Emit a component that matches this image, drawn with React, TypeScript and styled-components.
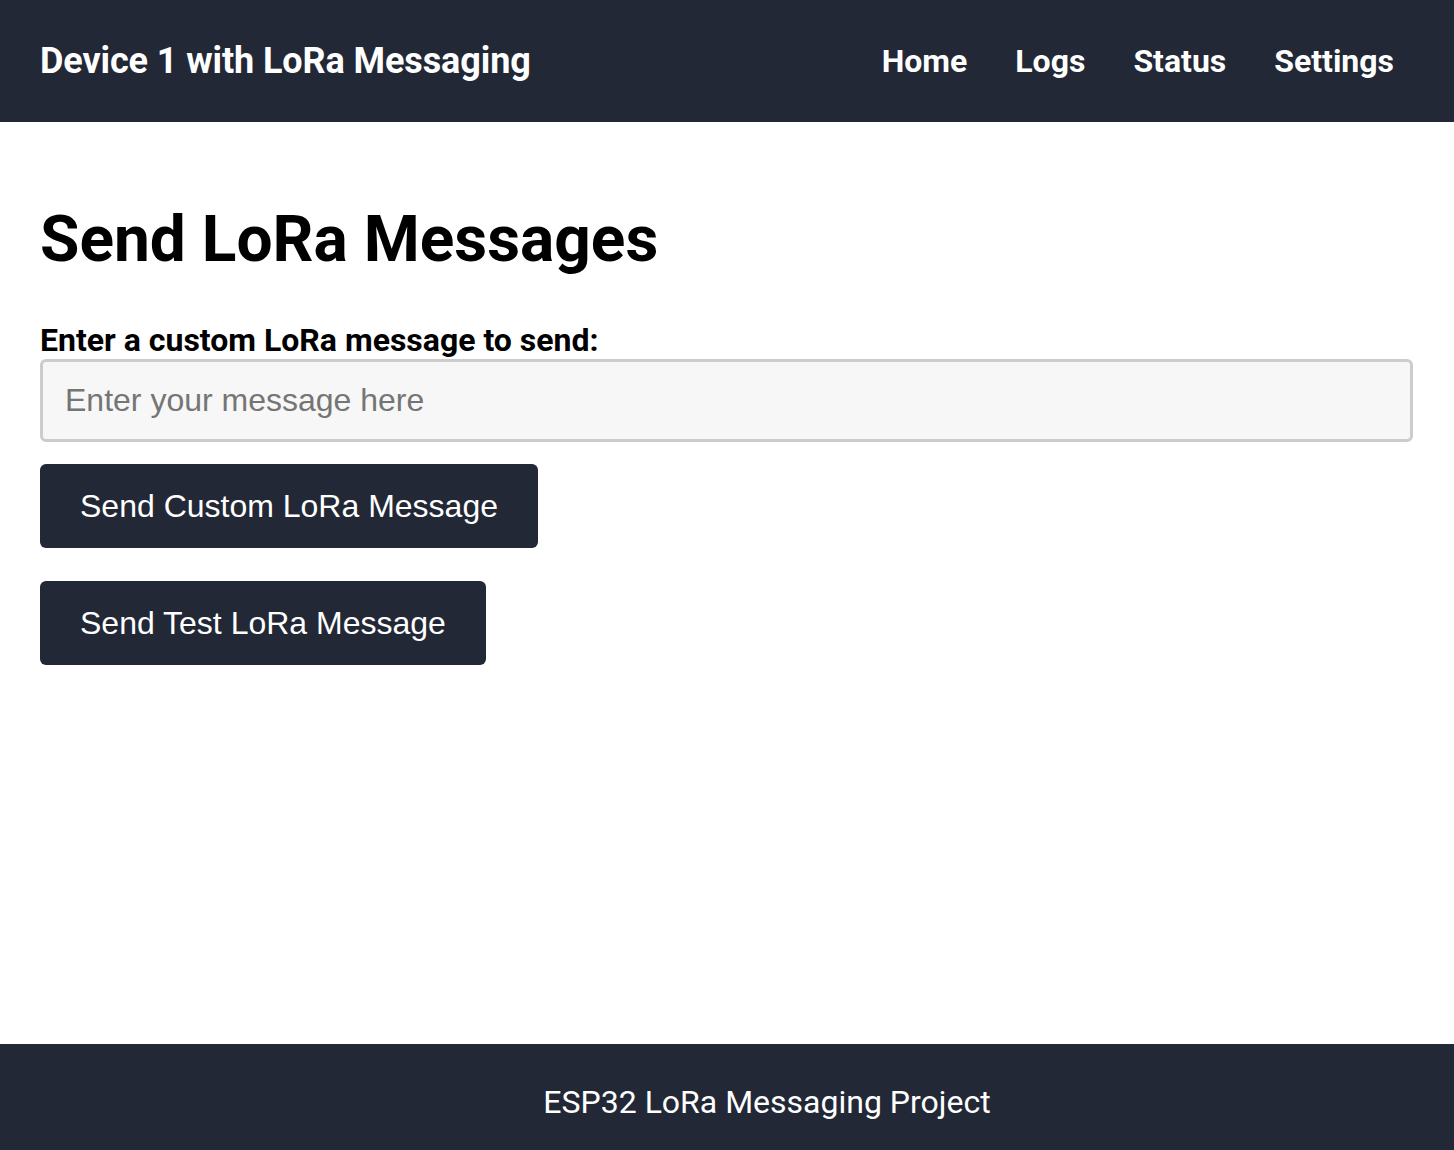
import React, { useState } from 'react'
import styled, { createGlobalStyle } from 'styled-components'

const GlobalStyle = createGlobalStyle`
  * { box-sizing: border-box; }
  html, body {
    margin: 0;
    padding: 0;
    background: #fff;
    font-family: Roboto, "Liberation Sans", Arial, sans-serif;
  }
`

const Page = styled.div`
  display: flex;
  flex-direction: column;
  min-height: 1150px;
`

const Header = styled.header`
  display: flex;
  align-items: center;
  justify-content: space-between;
  height: 122px;
  padding: 0 60px 0 40px;
  background-color: #222836;
  color: #fff;
`

const Brand = styled.div`
  font-size: 36px;
  font-weight: 700;
  letter-spacing: -0.1px;
`

const Nav = styled.nav`
  display: flex;
  gap: 48px;
`

const NavLink = styled.a`
  color: #fff;
  font-size: 32px;
  font-weight: 700;
  text-decoration: none;
  cursor: pointer;
`

const Main = styled.main`
  flex: 1;
  padding: 0 41px 0 40px;
`

const Title = styled.h1`
  margin: 80px 0 0;
  font-size: 64px;
  font-weight: 700;
  line-height: 1.2;
  color: #000;
`

const FormLabel = styled.label`
  display: block;
  margin-top: 42px;
  font-size: 32px;
  font-weight: 700;
  line-height: 1.2;
  color: #000;
`

const Input = styled.input.attrs(() => ({
  type: 'text',
}))`
  display: block;
  width: 100%;
  height: 83px;
  margin-top: 0;
  padding: 0 22px;
  border: 3px solid #cccccc;
  border-radius: 6px;
  background-color: #f7f7f7;
  font-family: "Liberation Sans", Arial, sans-serif;
  font-size: 32px;
  color: #000;
  outline: none;

  &::placeholder {
    color: #757575;
  }
`

const ButtonPrimary = styled.button<{ $top: number }>`
  display: block;
  height: 84px;
  margin-top: ${({ $top }) => $top}px;
  padding: 0 40px;
  border: unset;
  border-radius: 6px;
  background-color: #222836;
  color: #fff;
  font-family: "Liberation Sans", Arial, sans-serif;
  font-size: 32px;
  cursor: pointer;
`

const Footer = styled.footer`
  display: flex;
  align-items: center;
  justify-content: center;
  height: 106px;
  padding: 10px 0 0 80px;
  background-color: #222836;
  color: #fff;
  font-size: 32px;
`

export default function App() {
  const [message, setMessage] = useState('')

  return (
    <Page>
      <GlobalStyle />
      <Header>
        <Brand>Device 1 with LoRa Messaging</Brand>
        <Nav>
          <NavLink>Home</NavLink>
          <NavLink>Logs</NavLink>
          <NavLink>Status</NavLink>
          <NavLink>Settings</NavLink>
        </Nav>
      </Header>
      <Main>
        <Title>Send LoRa Messages</Title>
        <form onSubmit={(e) => e.preventDefault()}>
          <FormLabel htmlFor="message">Enter a custom LoRa message to send:</FormLabel>
          <Input
            id="message"
            placeholder="Enter your message here"
            value={message}
            onChange={(e) => setMessage(e.target.value)}
          />
          <ButtonPrimary $top={22}>Send Custom LoRa Message</ButtonPrimary>
        </form>
        <ButtonPrimary $top={33}>Send Test LoRa Message</ButtonPrimary>
      </Main>
      <Footer>ESP32 LoRa Messaging Project</Footer>
    </Page>
  )
}
